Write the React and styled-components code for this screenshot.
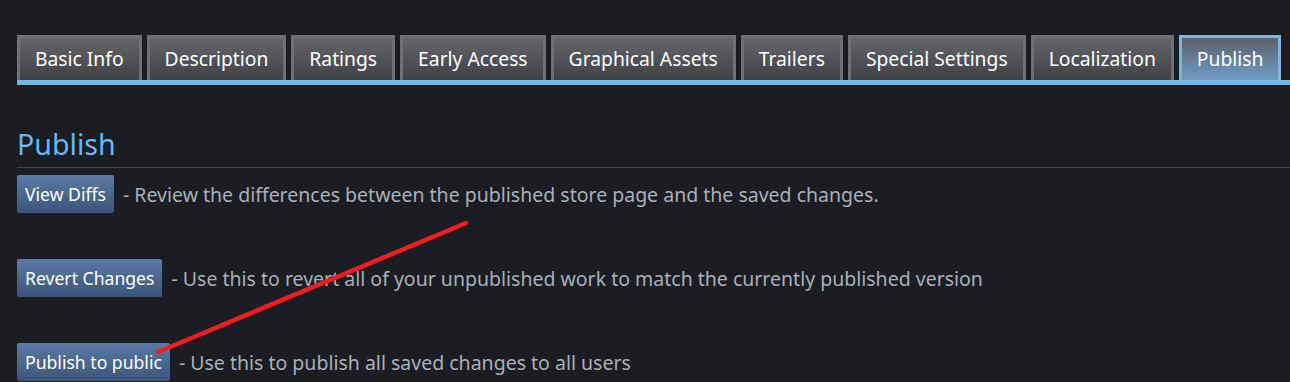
import React from "react";
import styled, { createGlobalStyle } from "styled-components";

const Global = createGlobalStyle`
  html, body { margin: 0; padding: 0; background: #1b1d23; }
  body { font-family: "Noto Sans", "Open Sans", sans-serif; }
  * { box-sizing: border-box; }
`;

const Page = styled.div`
  position: relative;
  width: 1290px;
  height: 382px;
  overflow: hidden;
  background: #1b1d23;
  padding: 35px 0 0 17px;
`;

const TabBar = styled.div`
  display: flex;
  gap: 5px;
  border-bottom: 5px solid #79b6e4;
  height: 50px;
`;

const Tab = styled.div`
  height: 45px;
  padding: 0 15px 1px;
  display: flex;
  align-items: center;
  font-size: 19.3px;
  color: #ffffff;
  border: 3px solid ${(p) => (p.$active ? "#7ab8e4" : "#6f7072")};
  border-bottom: none;
  background: ${(p) =>
    p.$active
      ? "linear-gradient(to bottom, #5c6068 0%, #6f9cc4 100%)"
      : "linear-gradient(to bottom, #646569 0%, #3f4144 100%)"};
  white-space: nowrap;
`;

const Heading = styled.h2`
  margin: 41px 0 0 0;
  font-weight: 400;
  font-size: 28.6px;
  line-height: 36px;
  color: #66b8f1;
  padding-bottom: 5px;
  border-bottom: 1px solid #43464b;
`;

const Rows = styled.div`
  display: flex;
  flex-direction: column;
  gap: 46px;
  margin-top: 7px;
`;

const Row = styled.div`
  display: flex;
  align-items: center;
  gap: 9px;
`;

const Button = styled.div`
  height: 38px;
  padding: 0 8px;
  display: flex;
  align-items: center;
  border-radius: 2px;
  font-size: 17.6px;
  color: #ffffff;
  background: linear-gradient(to bottom, #5b7aa3 0%, #3d5478 100%);
  white-space: nowrap;
`;

const Desc = styled.span`
  font-size: 19.5px;
  color: #a9b0b8;
  white-space: nowrap;
`;

const Overlay = styled.svg`
  position: absolute;
  left: 0;
  top: 0;
  pointer-events: none;
`;

const tabs = [
  "Basic Info",
  "Description",
  "Ratings",
  "Early Access",
  "Graphical Assets",
  "Trailers",
  "Special Settings",
  "Localization",
  "Publish",
];

const rows = [
  ["View Diffs", "- Review the differences between the published store page and the saved changes."],
  ["Revert Changes", "- Use this to revert all of your unpublished work to match the currently published version"],
  ["Publish to public", "- Use this to publish all saved changes to all users"],
];

export default function App() {
  return (
    <>
      <Global />
      <Page>
        <TabBar>
          {tabs.map((t) => (
            <Tab key={t} $active={t === "Publish"}>
              {t}
            </Tab>
          ))}
        </TabBar>
        <Heading>Publish</Heading>
        <Rows>
          {rows.map(([b, d]) => (
            <Row key={b}>
              <Button>{b}</Button>
              <Desc>{d}</Desc>
            </Row>
          ))}
        </Rows>
        <Overlay width="1290" height="382" viewBox="0 0 1290 382">
          <line x1="466" y1="223" x2="158" y2="352" stroke="#ee1c25" strokeWidth="4.5" strokeLinecap="round" />
        </Overlay>
      </Page>
    </>
  );
}
